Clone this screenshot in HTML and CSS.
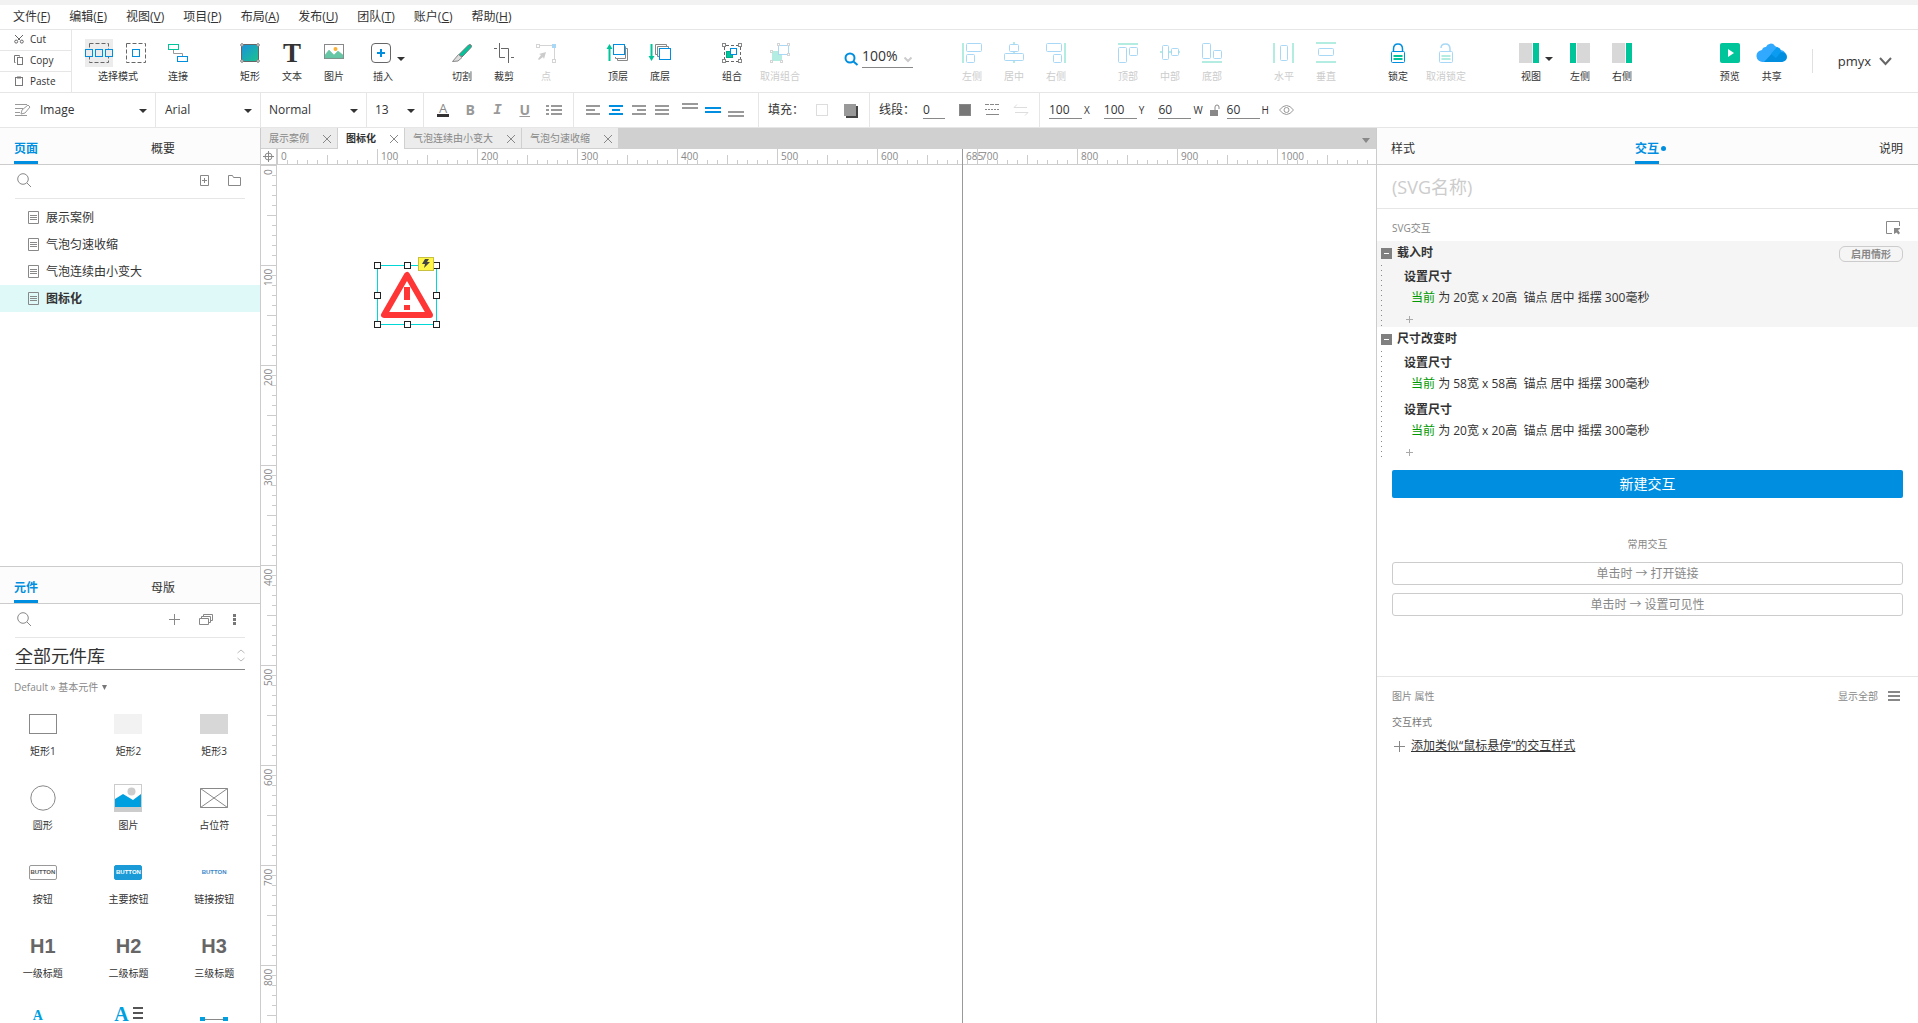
FILE: index.html
```
<!DOCTYPE html>
<html lang="zh-CN">
<head>
  <meta charset="UTF-8">
  <meta name="viewport" content="width=device-width, initial-scale=1.0">
  <title>图标化</title>
  <link rel="stylesheet" href="styles.css">
</head>
<body>
  <nav class="menu">
    <button>文件(<u>F</u>)</button>
    <button>编辑(<u>E</u>)</button>
    <button>视图(<u>V</u>)</button>
    <button>项目(<u>P</u>)</button>
    <button>布局(<u>A</u>)</button>
    <button>发布(<u>U</u>)</button>
    <button>团队(<u>T</u>)</button>
    <button>账户(<u>C</u>)</button>
    <button>帮助(<u>H</u>)</button>
  </nav>

  <header class="toolbar">
    <div class="clip">
      <button><svg width="10" height="10" viewBox="0 0 10 10" fill="none" stroke="#666"><path d="M1 1l5 5M9 1L4 6"/><circle cx="2.2" cy="7.6" r="1.5"/><circle cx="7.8" cy="7.6" r="1.5"/></svg>Cut</button>
      <button><svg width="10" height="10" viewBox="0 0 10 10" fill="none" stroke="#777"><path d="M1.500 7.500h-1v-7h5v1"/><rect x="3.500" y="2.500" width="5" height="7"/></svg>Copy</button>
      <button><svg width="10" height="10" viewBox="0 0 10 10" fill="none" stroke="#777"><rect x="1.500" y="1.500" width="7" height="8"/><path d="M3 1.500h4" stroke-width="2"/></svg>Paste</button>
    </div>

    <div class="group first">
      <button class="tool modes">
        <span class="mode-icons">
          <svg class="picked" width="28" height="28" viewBox="0 0 28 28" fill="none" stroke="#666"><rect x="4.500" y="4.500" width="19" height="19" stroke-dasharray="4 2"/><g stroke="#008fe0" fill="#ececec"><rect x=".5" y="10.500" width="7" height="7"/><rect x="10.500" y="10.500" width="7" height="7"/><rect x="20.500" y="10.500" width="7" height="7"/></g></svg>
          <svg width="20" height="20" viewBox="0 0 20 20" fill="none" stroke="#666"><rect x=".5" y=".5" width="19" height="19" stroke-dasharray="4 2"/><rect x="6.500" y="6.500" width="7" height="7" stroke="#008fe0"/></svg>
        </span>选择模式</button>
      <button class="tool"><svg width="20" height="20" viewBox="0 0 20 20" fill="none"><path d="M5.500 7v3.500h9V13" stroke="#999"/><rect x=".5" y="1.500" width="10" height="5" stroke="#00c49a"/><rect x="9.500" y="13.500" width="10" height="5" stroke="#008fe0"/></svg>连接</button>
    </div>

    <div class="group">
      <button class="tool"><svg width="20" height="20" viewBox="0 0 20 20"><defs><linearGradient id="fill" x1="0" y1="0" x2="1" y2="1"><stop offset="0" stop-color="#1a92dd"/><stop offset="1" stop-color="#1cc48c"/></linearGradient></defs><rect x="1.500" y="1.500" width="17" height="17" fill="url(#fill)" stroke="#666"/><g fill="#fff" stroke="#777"><circle cx="2" cy="2" r="1.300"/><circle cx="18" cy="2" r="1.300"/><circle cx="2" cy="18" r="1.300"/><circle cx="18" cy="18" r="1.300"/></g></svg>矩形</button>
      <button class="tool"><svg width="20" height="20" viewBox="0 0 20 20"><text class="glyph-t" x="10" y="19" text-anchor="middle">T</text></svg>文本</button>
      <button class="tool"><svg width="20" height="20" viewBox="0 0 20 20"><rect x=".5" y="1.500" width="19" height="14" fill="#fff" stroke="#888"/><circle cx="11.500" cy="6" r="2" fill="#fbb034"/><path d="M1 12l4-5 5 5 4-4 5 4v3H1z" fill="#66c7a6" stroke="#6b9" stroke-width=".5"/></svg>图片</button>
      <button class="tool drop"><svg width="20" height="20" viewBox="0 0 20 20" fill="none"><rect x=".5" y=".5" width="19" height="19" rx="3.500" stroke="#666"/><path d="M10 6v8M6 10h8" stroke="#008fe0" stroke-width="2"/></svg>插入</button>
    </div>

    <div class="group">
      <button class="tool"><svg width="20" height="20" viewBox="0 0 20 20"><path d="M7 11.500L16.500 2q1.500-1 2.500 0t0 2.500L10 14z" fill="#00c49a" stroke="#777"/><path d="M.5 18.500l6-7 3.500 3-4 3.500z" fill="#ddd" stroke="#888"/></svg>切割</button>
      <button class="tool"><svg width="20" height="20" viewBox="0 0 20 20" fill="none" stroke="#666"><path d="M0 5.500h3M5.500 0v14.500H11M7 5.500h7.500V20M17 14.500h3"/></svg>裁剪</button>
      <button class="tool off" disabled><svg width="20" height="20" viewBox="0 0 20 20" fill="none" stroke="#d4d4d4"><path d="M3 2.500h14M18.500 4v12"/><rect x=".5" y="1.500" width="3" height="3"/><rect x="16.500" y="16.500" width="3" height="3"/><path d="M16 1h4v4h-4z" fill="#a8d8f5" stroke="none"/><path d="M10 9l-7 2 2 1-3 4 1 1 4-3 1 2z" fill="#ccc" stroke="none"/></svg>点</button>
    </div>

    <div class="group">
      <button class="tool"><svg width="22" height="20" viewBox="0 0 22 20" fill="none"><path d="M2.500 18V4" stroke="#00c49a" stroke-width="2"/><path d="M-.5 6l3-5 3 5z" fill="#00c49a"/><path d="M18.500 5.500h2v12h-10v-2M17 3.500h1.500v12h-10V14" stroke="#888"/><rect x="6.500" y="1.500" width="11" height="10" stroke="#008fe0" fill="#fff"/></svg>顶层</button>
      <button class="tool"><svg width="22" height="20" viewBox="0 0 22 20" fill="none"><path d="M2.500 1v14" stroke="#00c49a" stroke-width="2"/><path d="M-.5 13l3 5 3-5z" fill="#00c49a"/><path d="M9 11.500H6.500v-10h11V4M11 13.500H8.500v-10h11V5" stroke="#888"/><rect x="10.500" y="5.500" width="11" height="11" stroke="#008fe0" fill="#fff"/></svg>底层</button>
    </div>

    <div class="group">
      <button class="tool"><svg width="20" height="20" viewBox="0 0 20 20" fill="none"><path d="M4 2.500h12M4 18.500h12M2.500 4v12M18.500 4v12" stroke="#666" stroke-dasharray="3 2"/><g stroke="#888" fill="#fff"><rect x=".5" y=".5" width="3" height="3"/><rect x="16.500" y=".5" width="3" height="3"/><rect x=".5" y="16.500" width="3" height="3"/><rect x="16.500" y="16.500" width="3" height="3"/></g><rect x="4.500" y="8.500" width="6" height="6" fill="#00c49a" stroke="#0a8"/><rect x="8.500" y="5.500" width="6" height="6" fill="#fff" stroke="#008fe0"/></svg>组合</button>
      <button class="tool wide off" disabled><svg width="20" height="20" viewBox="0 0 20 20" fill="none"><rect x="2" y="8" width="10" height="10" fill="#b3ece0"/><rect x="8.500" y="2.500" width="10" height="9" fill="#fff" stroke="#a8d8f5"/><g stroke="#d4d4d4" fill="#fff"><rect x=".5" y="7.500" width="2" height="2"/><rect x=".5" y="17.500" width="2" height="2"/><rect x="10.500" y="17.500" width="2" height="2"/><rect x="7.500" y=".5" width="2" height="2"/><rect x="17.500" y=".5" width="2" height="2"/><rect x="17.500" y="10.500" width="2" height="2"/></g></svg>取消组合</button>
    </div>

    <div class="group zoom">
      <svg width="14" height="14" viewBox="0 0 14 14" fill="none" stroke="#008fe0" stroke-width="2"><circle cx="6" cy="6" r="4.500"/><path d="M9.500 9.500l4 3.500"/></svg>
      <label class="zoom-value"><input value="100%" aria-label="缩放"><svg width="8" height="5" viewBox="0 0 8 5" fill="none" stroke="#ccc" stroke-width="2"><path d="M.5.5L4 4 7.500.5"/></svg></label>
    </div>

    <div class="group">
      <button class="tool off" disabled><svg width="20" height="20" viewBox="0 0 20 20" fill="none" stroke="#a8d8f5"><path d="M1 0v20" stroke="#b3ece0" stroke-width="2"/><rect x="4.500" y=".5" width="15" height="8" rx="1"/><rect x="4.500" y="11.500" width="8" height="8" rx="1"/></svg>左侧</button>
      <button class="tool off" disabled><svg width="20" height="20" viewBox="0 0 20 20" fill="none" stroke="#a8d8f5"><path d="M10-1v21" stroke="#b3ece0" stroke-width="2"/><rect x="5.500" y="1.500" width="9" height="7" rx="1" fill="#fff"/><rect x=".5" y="10.500" width="19" height="7" rx="1" fill="#fff"/></svg>居中</button>
      <button class="tool off" disabled><svg width="20" height="20" viewBox="0 0 20 20" fill="none" stroke="#a8d8f5"><path d="M19 0v20" stroke="#b3ece0" stroke-width="2"/><rect x=".5" y=".5" width="15" height="8" rx="1"/><rect x="7.500" y="11.500" width="8" height="8" rx="1"/></svg>右侧</button>
    </div>

    <div class="group">
      <button class="tool off" disabled><svg width="20" height="20" viewBox="0 0 20 20" fill="none" stroke="#a8d8f5"><path d="M0 1h20" stroke="#b3ece0" stroke-width="2"/><rect x=".5" y="4.500" width="8" height="15" rx="1"/><rect x="11.500" y="4.500" width="8" height="8" rx="1"/></svg>顶部</button>
      <button class="tool off" disabled><svg width="20" height="20" viewBox="0 0 20 20" fill="none" stroke="#a8d8f5"><path d="M0 9h20" stroke="#b3ece0" stroke-width="2"/><rect x="2.500" y="2.500" width="6" height="14" rx="1" fill="#fff"/><rect x="11.500" y="5.500" width="7" height="7" rx="1" fill="#fff"/></svg>中部</button>
      <button class="tool off" disabled><svg width="20" height="20" viewBox="0 0 20 20" fill="none" stroke="#a8d8f5"><path d="M0 19h20" stroke="#b3ece0" stroke-width="2"/><rect x=".5" y=".5" width="8" height="15" rx="1"/><rect x="11.500" y="7.500" width="8" height="8" rx="1"/></svg>底部</button>
    </div>

    <div class="group">
      <button class="tool off" disabled><svg width="20" height="20" viewBox="0 0 20 20" fill="none" stroke="#a8d8f5"><path d="M0 0v20M19 0v20" stroke="#b3ece0" stroke-width="2"/><rect x="6.500" y="2.500" width="7" height="15" rx="1"/></svg>水平</button>
      <button class="tool off" disabled><svg width="20" height="20" viewBox="0 0 20 20" fill="none" stroke="#a8d8f5"><path d="M0 0h20M0 19h20" stroke="#b3ece0" stroke-width="2"/><rect x="2.500" y="5.500" width="15" height="7" rx="1"/></svg>垂直</button>
    </div>

    <div class="group">
      <button class="tool"><svg width="20" height="20" viewBox="0 0 20 20" fill="none" stroke="#008fe0"><path d="M5.500 8V6q0-5 4.500-5t4.500 5v2" stroke-width="1.500"/><rect x="3.500" y="8.500" width="13" height="11" rx="1"/><path d="M5.500 13h9M5.500 16h9" stroke="#00c49a" stroke-width="2"/></svg>锁定</button>
      <button class="tool wide off" disabled><svg width="20" height="20" viewBox="0 0 20 20" fill="none" stroke="#a8d8f5"><path d="M5 5q0-4 4.500-4t4.500 5v2" stroke-width="1.500"/><rect x="3.500" y="8.500" width="13" height="11" rx="1"/><path d="M5.500 13h9M5.500 16h9" stroke="#b3ece0" stroke-width="2"/></svg>取消锁定</button>
    </div>

    <div class="group">
      <button class="tool drop"><svg width="20" height="20" viewBox="0 0 20 20"><path d="M0 0h13v20H0z" fill="#d8d8d8"/><path d="M14 0h6v20h-6z" fill="#00c49a"/></svg>视图</button>
      <button class="tool"><svg width="20" height="20" viewBox="0 0 20 20"><path d="M0 0h6v20H0z" fill="#00c49a"/><path d="M7 0h13v20H7z" fill="#d8d8d8"/></svg>左侧</button>
      <button class="tool"><svg width="20" height="20" viewBox="0 0 20 20"><path d="M0 0h13v20H0z" fill="#d8d8d8"/><path d="M14 0h6v20h-6z" fill="#00c49a"/></svg>右侧</button>
    </div>

    <div class="group last">
      <button class="tool"><svg width="20" height="20" viewBox="0 0 20 20"><rect width="20" height="20" rx="2" fill="#00c49a"/><path d="M8 6l6 4-6 4z" fill="#fff"/></svg>预览</button>
      <button class="tool"><svg width="30" height="20" viewBox="0 0 30 20"><path d="M6 19a6 6 0 01-1-12 4 4 0 014-3 5 5 0 019-1 6 6 0 014 4 6 6 0 012 12z" fill="#31a9ff"/><path d="M7 19L20 5q3 0 3 4 7 0 7 5 0 4-5 5z" fill="#008fe0"/><path d="M14 11l6-7q4 1 4 5l-5 6z" fill="#0a9cf0"/></svg>共享</button>
    </div>
    <button class="account">pmyx<svg width="13" height="9" viewBox="0 0 13 9" fill="none" stroke="#666" stroke-width="2"><path d="M1 1l5.500 6L12 1"/></svg></button>
  </header>

  <div class="format">
    <div class="cell style-cell">
      <svg width="16" height="14" viewBox="0 0 16 14" fill="none" stroke="#999"><path d="M0 1.500h12M0 5.500h8M0 9.500h5M0 12.500h12M6 11l1-4 6-5 2 2-5 6z"/></svg>
      <select aria-label="样式"><option>Image</option></select>
    </div>
    <div class="cell font-cell"><select aria-label="字体"><option>Arial</option></select></div>
    <div class="cell weight-cell"><select aria-label="字重"><option>Normal</option></select></div>
    <div class="cell size-cell"><select aria-label="字号"><option>13</option></select></div>
    <div class="cell text-cell">
      <button class="ft color">A</button>
      <button class="ft bold">B</button>
      <button class="ft italic">I</button>
      <button class="ft under">U</button>
      <button aria-label="项目符号"><svg width="16" height="12" viewBox="0 0 16 12" stroke="#999" stroke-width="2"><path d="M0 2h3M5 2h11M0 6h3M5 6h11M0 10h3M5 10h11"/></svg></button>
    </div>
    <div class="cell align-cell">
      <button aria-label="左对齐"><svg width="14" height="12" viewBox="0 0 14 12" stroke="#999" stroke-width="2"><path d="M0 2h14M0 6h9M0 10h14"/></svg></button>
      <button aria-label="居中对齐"><svg width="14" height="12" viewBox="0 0 14 12" stroke="#008fe0" stroke-width="2"><path d="M0 2h14M3 6h8M0 10h14"/></svg></button>
      <button aria-label="右对齐"><svg width="14" height="12" viewBox="0 0 14 12" stroke="#999" stroke-width="2"><path d="M0 2h14M5 6h9M0 10h14"/></svg></button>
      <button aria-label="两端对齐"><svg width="14" height="12" viewBox="0 0 14 12" stroke="#999" stroke-width="2"><path d="M0 2h14M0 6h14M0 10h14"/></svg></button>
      <button class="vertical" aria-label="顶部"><svg width="16" height="14" viewBox="0 0 16 14" stroke="#999" stroke-width="2"><path d="M0 1h16M0 5h16"/></svg></button>
      <button aria-label="中部"><svg width="16" height="14" viewBox="0 0 16 14" stroke="#008fe0" stroke-width="2"><path d="M0 5h16M0 9h16"/></svg></button>
      <button aria-label="底部"><svg width="16" height="14" viewBox="0 0 16 14" stroke="#999" stroke-width="2"><path d="M0 9h16M0 13h16"/></svg></button>
    </div>
    <div class="cell fill-cell">
      <span>填充：</span>
      <button class="swatch" aria-label="填充颜色"></button>
      <button class="swatch shadow" aria-label="阴影"></button>
    </div>
    <div class="cell line-cell">
      <label for="line">线段：</label>
      <input id="line" class="short" value="0">
      <button class="swatch dark" aria-label="线段颜色"></button>
      <button aria-label="线型"><svg width="15" height="12" viewBox="0 0 15 12" stroke="#888"><path d="M0 .5h15" stroke-dasharray="4 1"/><path d="M0 5.500h15" stroke-dasharray="2 1"/><path d="M1 10.500h13"/></svg></button>
      <button aria-label="箭头"><svg width="14" height="12" viewBox="0 0 14 12" fill="none" stroke="#ddd"><path d="M13 3.500H0L3 .5M1 8.500h13l-3 3"/></svg></button>
    </div>
    <div class="cell size-pos">
      <label><input value="100">X</label>
      <label><input value="100">Y</label>
      <label><input value="60">W</label>
      <svg class="ratio" width="10" height="12" viewBox="0 0 10 12"><path d="M0 6h8v6H0z" fill="#888"/><path d="M5 6V3q0-2 2-2t2 2v2" fill="none" stroke="#888"/></svg>
      <label><input value="60">H</label>
      <button aria-label="显示"><svg width="15" height="10" viewBox="0 0 15 10" fill="none" stroke="#999"><path d="M.5 5q7-9 14 0-7 9-14 0z"/><circle cx="7.500" cy="5" r="2.500"/></svg></button>
    </div>
  </div>

  <main class="work">
    <aside class="left">
      <section class="pages">
        <div class="tabs"><button class="on">页面</button><button>概要</button></div>
        <div class="find">
          <svg class="search" width="15" height="15" viewBox="0 0 15 15" fill="none" stroke="#888"><circle cx="6" cy="6" r="5.300"/><path d="M10 10l4 4"/></svg>
          <button aria-label="添加页面"><svg width="9" height="11" viewBox="0 0 9 11" fill="none" stroke="#888"><path d="M.5.5h8v10h-8zM2 5.500h5M4.500 3v5"/></svg></button>
          <button aria-label="添加文件夹"><svg width="13" height="11" viewBox="0 0 13 11" fill="none" stroke="#888"><path d="M.5 10.500V.5h4l1 2h7v8z"/></svg></button>
        </div>
        <ul class="tree">
          <li><svg width="11" height="13" viewBox="0 0 11 13" fill="none" stroke="#888"><path d="M.5.5h10v12H.5zM2 4.500h7M2 6.500h7M2 8.500h7"/></svg>展示案例</li>
          <li><svg width="11" height="13" viewBox="0 0 11 13" fill="none" stroke="#888"><path d="M.5.5h10v12H.5zM2 4.500h7M2 6.500h7M2 8.500h7"/></svg>气泡匀速收缩</li>
          <li><svg width="11" height="13" viewBox="0 0 11 13" fill="none" stroke="#888"><path d="M.5.5h10v12H.5zM2 4.500h7M2 6.500h7M2 8.500h7"/></svg>气泡连续由小变大</li>
          <li class="on"><svg width="11" height="13" viewBox="0 0 11 13" fill="none" stroke="#888"><path d="M.5.5h10v12H.5zM2 4.500h7M2 6.500h7M2 8.500h7"/></svg>图标化</li>
        </ul>
      </section>

      <section class="library">
        <div class="tabs"><button class="on">元件</button><button>母版</button></div>
        <div class="find">
          <svg class="search" width="15" height="15" viewBox="0 0 15 15" fill="none" stroke="#888"><circle cx="6" cy="6" r="5.300"/><path d="M10 10l4 4"/></svg>
          <button aria-label="添加元件库"><svg width="11" height="11" viewBox="0 0 11 11" stroke="#888"><path d="M5.500 0v11M0 5.500h11"/></svg></button>
          <button aria-label="元件库"><svg width="14" height="11" viewBox="0 0 14 11" fill="none" stroke="#888"><path d="M.5 4.500h9v6h-9zM2.500 4V2.500h9v6H10M4.500 2V.5h9v6H12"/></svg></button>
          <button aria-label="更多"><svg width="9" height="11" viewBox="0 0 9 11" fill="#777"><path d="M1 0h3v3H1zM1 4h3v3H1zM1 8h3v3H1z"/></svg></button>
        </div>
        <div class="lib-name">
          <select aria-label="元件库"><option>全部元件库</option></select>
          <svg width="8" height="13" viewBox="0 0 8 13" fill="none" stroke="#bbb"><path d="M.5 4L4 1l3.500 3M.5 9L4 12l3.500-3"/></svg>
        </div>
        <button class="crumb">Default » 基本元件 <svg width="5" height="5" viewBox="0 0 5 5" fill="#777"><path d="M0 0h5L2.500 5z"/></svg></button>
        <ul class="widgets">
          <li><span><svg width="28" height="20"><rect x=".5" y=".5" width="27" height="19" fill="#fff" stroke="#888"/></svg></span>矩形1</li>
          <li><span><svg width="28" height="20"><rect width="28" height="20" fill="#f2f2f2"/></svg></span>矩形2</li>
          <li><span><svg width="28" height="20"><rect width="28" height="20" fill="#d7d7d7"/></svg></span>矩形3</li>
          <li><span><svg width="26" height="26"><circle cx="13" cy="13" r="12.200" fill="none" stroke="#888"/></svg></span>圆形</li>
          <li><span><svg width="28" height="28"><rect x=".5" y=".5" width="27" height="27" fill="#fff" stroke="#ccc"/><circle cx="17.500" cy="7.500" r="4" fill="#ccc"/><path d="M1 15l8-5 10 6 8-6v13H1z" fill="#009fdf"/><path d="M1 23h26v5H1z" fill="#ccc"/></svg></span>图片</li>
          <li><span><svg width="28" height="20" fill="none" stroke="#888"><path d="M.5.5h27v19H.5zM.5.5l27 19M27.500.5l-27 19"/></svg></span>占位符</li>
          <li><span><b class="mini">BUTTON</b></span>按钮</li>
          <li><span><b class="mini primary">BUTTON</b></span>主要按钮</li>
          <li><span><b class="mini plain">BUTTON</b></span>链接按钮</li>
          <li><span><b class="heading">H1</b></span>一级标题</li>
          <li><span><b class="heading">H2</b></span>二级标题</li>
          <li><span><b class="heading">H3</b></span>三级标题</li>
          <li><span class="tail label-a">A</span></li>
          <li><span class="tail label-p">A<svg width="10" height="12" viewBox="0 0 10 12" stroke="#555" stroke-width="2"><path d="M0 1h10M0 6h10M0 11h10"/></svg></span></li>
          <li><span class="tail line-shape"><svg width="28" height="4"><path d="M0 2.500h28" stroke="#888"/><path d="M0 0h5v4H0zM23 0h5v4h-5z" fill="#009fdf"/></svg></span></li>
        </ul>
      </section>
    </aside>

    <section class="center">
      <div class="docs">
        <button>展示案例<i></i></button>
        <button class="on">图标化<i></i></button>
        <button>气泡连续由小变大<i></i></button>
        <button>气泡匀速收缩<i></i></button>
      </div>
      <div class="stage">
        <div class="origin"><svg width="11" height="11" viewBox="0 0 11 11" fill="none" stroke="#888"><circle cx="5.500" cy="5.500" r="3.500"/><path d="M5.500 0v11M0 5.500h11"/></svg></div>
        <div class="ruler across"><span>0</span><span>100</span><span>200</span><span>300</span><span>400</span><span>500</span><span>600</span><span>700</span><span>800</span><span>900</span><span>1000</span></div>
        <div class="ruler down"><span>0</span><span>100</span><span>200</span><span>300</span><span>400</span><span>500</span><span>600</span><span>700</span><span>800</span></div>
        <div class="canvas">
          <div class="selected">
            <svg width="60" height="60" viewBox="0 0 60 60"><path d="M30 10L7 50h46z" fill="none" stroke="#ff3636" stroke-width="6" stroke-linejoin="round"/><path d="M27 22h6v13h-6zM27 40h6v5h-6z" fill="#ff3636"/></svg>
            <b class="h nw"></b><b class="h n"></b><b class="h ne"></b><b class="h w"></b><b class="h e"></b><b class="h sw"></b><b class="h s"></b><b class="h se"></b>
            <div class="bolt"><svg width="8" height="9" viewBox="0 0 8 9" fill="#444"><path d="M3 0h4L5 3h3L2 9l1-4H0z"/></svg></div>
          </div>
        </div>
        <div class="guide">685</div>
      </div>
    </section>

    <aside class="right">
      <div class="tabs spread"><button>样式</button><button class="on dot">交互</button><button>说明</button></div>
      <input class="name" placeholder="(SVG名称)" aria-label="SVG名称">
      <div class="sub"><span>SVG交互</span><svg width="14" height="14" viewBox="0 0 14 14" fill="none" stroke="#888"><path d="M6 12.500H.5V.5h13V5"/><path d="M8 7h6v1l-2 1 2 3-1.500 1.500-2-2L8 13z" fill="#888" stroke="none"/></svg></div>

      <div class="case picked-case">
        <div class="event"><button class="fold" aria-label="折叠"></button>载入时<button class="enable">启用情形</button></div>
        <div class="steps">
          <h4>设置尺寸</h4>
          <p><em>当前</em> 为 20宽 x 20高 &nbsp;锚点 居中 摇摆 300毫秒</p>
          <button class="plus" aria-label="添加动作"></button>
        </div>
      </div>
      <div class="case">
        <div class="event"><button class="fold" aria-label="折叠"></button>尺寸改变时</div>
        <div class="steps">
          <h4>设置尺寸</h4>
          <p><em>当前</em> 为 58宽 x 58高 &nbsp;锚点 居中 摇摆 300毫秒</p>
          <h4>设置尺寸</h4>
          <p><em>当前</em> 为 20宽 x 20高 &nbsp;锚点 居中 摇摆 300毫秒</p>
          <button class="plus" aria-label="添加动作"></button>
        </div>
      </div>

      <div class="actions">
        <button class="new">新建交互</button>
        <p>常用交互</p>
        <button class="quick">单击时 → 打开链接</button>
        <button class="quick">单击时 → 设置可见性</button>
      </div>

      <div class="props">
        <div class="props-head"><span>图片 属性</span><button>显示全部<svg width="12" height="10" viewBox="0 0 12 10" stroke="#888" stroke-width="2"><path d="M0 1h12M0 5h12M0 9h12"/></svg></button></div>
        <h5>交互样式</h5>
        <a href="#"><svg width="11" height="11" viewBox="0 0 11 11" stroke="#888"><path d="M5.500 0v11M0 5.500h11"/></svg><span>添加类似“鼠标悬停”的交互样式</span></a>
      </div>
    </aside>
  </main>
</body>
</html>
```
FILE: styles.css
```
* {
  box-sizing: border-box;
}
body {
  margin: 0;
  height: 100vh;
  display: flex;
  flex-direction: column;
  overflow: hidden;
  background: #fff;
  color: #333;
  font-family: "Open Sans", "Noto Sans CJK SC", sans-serif;
  font-size: 12px;
  line-height: 16px;
}
button, input, select {
  margin: 0;
  padding: 0;
  border: none;
  background: none;
  color: inherit;
  font: inherit;
  white-space: nowrap;
}
input, select {
  outline: none;
  appearance: none;
}
svg {
  flex: none;
  display: block;
  overflow: visible;
}
ul {
  margin: 0;
  padding: 0;
  list-style: none;
}
p, h4, h5 {
  margin: 0;
}

/* menu */
.menu {
  flex: none;
  display: flex;
  gap: 19px;
  height: 30px;
  padding: 0 13px;
  border-top: 5px solid #f2f2f2;
  border-bottom: 1px solid #e6e6e6;
}

/* toolbar */
.toolbar {
  flex: none;
  display: flex;
  height: 63px;
  border-bottom: 1px solid #e6e6e6;
}
.clip {
  display: flex;
  flex-direction: column;
  width: 72px;
  border-right: 1px solid #e6e6e6;
}
.clip button {
  flex: 1;
  display: flex;
  align-items: center;
  gap: 6px;
  padding: 0 0 2px 14px;
  font-size: 10px;
  line-height: 12px;
}
.clip button + button {
  border-top: 1px solid #e6e6e6;
}
.group {
  display: flex;
  margin-left: 30px;
}
.group.first {
  margin-left: 13px;
}
.group.last {
  margin-left: auto;
}
.tool {
  position: relative;
  width: 42px;
  display: flex;
  flex-direction: column;
  align-items: center;
  padding-top: 13px;
  font-size: 10px;
  line-height: 14px;
}
.tool > svg {
  margin-bottom: 6px;
}
.tool.wide {
  width: 54px;
}
.tool.drop {
  width: 56px;
}
.tool.drop > svg {
  margin-right: 4px;
}
.tool.drop::after {
  content: "";
  position: absolute;
  right: 6px;
  top: 27px;
  border: 4px solid transparent;
  border-top-color: #333;
  border-bottom: none;
}
.tool.modes {
  width: 72px;
  padding-top: 9px;
  align-items: flex-start;
}
.mode-icons {
  display: flex;
  align-items: center;
  gap: 13px;
  margin-bottom: 2px;
}
.modes {
  text-indent: 13px;
}
.picked {
  background: #ececec;
}
.off {
  color: #ccc;
}
.glyph-t {
  font: bold 27px "Liberation Serif", serif;
  fill: #333;
}
.zoom {
  width: 84px;
  padding: 0 8px 0 7px;
  align-items: center;
  gap: 4px;
}
.zoom > svg {
  margin-bottom: 4px;
}
.zoom-value {
  flex: 1;
  display: flex;
  align-items: center;
  margin-bottom: 10px;
  border-bottom: 1px solid #888;
}
.zoom-value input {
  width: 42px;
  height: 22px;
  font-size: 14px;
}
.zoom-value svg {
  margin-top: 8px;
}
.account {
  display: flex;
  align-items: center;
  align-self: center;
  gap: 8px;
  height: 24px;
  margin: 0 26px 0 19px;
  padding-left: 25px;
  border-left: 1px solid #e0e0e0;
  font-size: 13px;
}

/* format bar */
.format {
  flex: none;
  display: flex;
  height: 35px;
  border-bottom: 1px solid #e6e6e6;
}
.cell {
  position: relative;
  display: flex;
  align-items: center;
  border-right: 1px solid #e6e6e6;
}
.cell:last-child {
  border: none;
}
.cell select {
  flex: 1;
  min-width: 0;
  height: 34px;
}
.cell:has(select)::after {
  content: "";
  position: absolute;
  right: 8px;
  top: 16px;
  border: 4px solid transparent;
  border-top-color: #333;
  border-bottom: none;
}
.style-cell {
  width: 156px;
  padding-left: 15px;
  gap: 9px;
}
.font-cell {
  width: 105px;
  padding-left: 9px;
}
.weight-cell {
  width: 106px;
  padding-left: 8px;
}
.size-cell {
  width: 57px;
  padding-left: 8px;
}
.text-cell {
  width: 150px;
  justify-content: space-between;
  padding: 0 11px 0 13px;
}
.ft {
  width: 12px;
  color: #999;
  font-size: 14px;
  line-height: 14px;
}
.color {
  color: #888;
  font-size: 13px;
  line-height: 11px;
  border-bottom: 3px solid #333;
}
.bold {
  font-weight: bold;
}
.italic {
  font-family: "Liberation Mono", monospace;
  font-style: italic;
  font-weight: bold;
}
.under {
  font-weight: bold;
  text-decoration: underline;
}
.align-cell {
  width: 185px;
  gap: 9px;
  padding-left: 12px;
}
.align-cell .vertical {
  margin-left: 4px;
}
.align-cell .vertical ~ button {
  margin-left: -2px;
}
.fill-cell {
  width: 111px;
  padding-left: 9px;
}
.swatch {
  width: 12px;
  height: 12px;
  border: 1px solid #ddd;
}
.fill-cell .swatch {
  margin-left: 12px;
}
.swatch.shadow {
  background: #999;
  border: none;
  box-shadow: 2px 2px #444;
}
.fill-cell .shadow {
  margin-left: 16px;
}
.swatch.dark {
  background: #777;
  border-color: #888;
}
.line-cell {
  width: 170px;
  padding-left: 9px;
  gap: 14px;
}
.cell input {
  width: 33px;
  height: 18px;
  border-bottom: 1px solid #888;
}
.cell input.short {
  width: 22px;
  margin-left: -6px;
}
.size-pos {
  flex: 1;
  padding-left: 9px;
  gap: 14px;
}
.size-pos label {
  display: flex;
  align-items: center;
  gap: 2px;
  font-size: 10px;
}
.size-pos input {
  font-size: 12px;
}
.size-pos .ratio {
  margin: 0 -7px;
}
.size-pos button {
  margin-left: -4px;
}

/* panels */
.work {
  flex: 1;
  min-height: 0;
  display: flex;
}
.left {
  flex: none;
  width: 261px;
  display: flex;
  flex-direction: column;
  border-right: 1px solid #ccc;
}
.pages {
  flex: none;
  height: 438px;
}
.library {
  flex: 1;
  min-height: 0;
  overflow: hidden;
  border-top: 1px solid #ccc;
}
.tabs {
  display: grid;
  grid-template-columns: 137px 1fr;
  justify-items: start;
  height: 37px;
  padding-left: 14px;
  background: #fcfcfc;
  border-bottom: 1px solid #ccc;
}
.tabs button {
  position: relative;
  padding-top: 9px;
  border-bottom: 3px solid transparent;
}
.tabs .on {
  color: #008fe0;
  font-weight: bold;
  border-color: #008fe0;
}
.tabs.spread {
  display: flex;
  justify-content: space-between;
  padding: 0 15px 0 14px;
}
.dot::after {
  content: "";
  position: absolute;
  left: 26px;
  top: 18px;
  width: 5px;
  height: 5px;
  border-radius: 50%;
  background: #008fe0;
}
.find {
  display: flex;
  align-items: center;
  gap: 19px;
  height: 34px;
  margin: 0 15px;
  padding: 0 4px 2px 2px;
  border-bottom: 1px solid #e6e6e6;
}
.search {
  margin-right: auto;
}
.tree {
  padding-top: 5px;
}
.tree li {
  display: flex;
  align-items: center;
  gap: 7px;
  height: 27px;
  padding-left: 28px;
}
.tree .on {
  background: #dff9f9;
  font-weight: bold;
}
.lib-name {
  display: flex;
  align-items: center;
  height: 32px;
  margin: 0 15px;
  padding-top: 4px;
  border-bottom: 1px solid #888;
}
.lib-name select {
  flex: 1;
  height: 28px;
  font-size: 18px;
}
.crumb {
  display: flex;
  align-items: center;
  gap: 4px;
  margin: 9px 14px 15px;
  color: #888;
  font-size: 10px;
}
.widgets {
  display: grid;
  grid-template-columns: repeat(3, 1fr);
  padding-right: 3px;
}
.widgets li {
  height: 74px;
  font-size: 10px;
  line-height: 14px;
  text-align: center;
}
.widgets span {
  display: flex;
  align-items: center;
  justify-content: center;
  height: 28px;
  margin-bottom: 6px;
}
.mini {
  width: 28px;
  height: 15px;
  border: 1px solid #999;
  border-radius: 2px;
  color: #555;
  font: bold 6px/13px "Liberation Sans", sans-serif;
}
.mini.primary {
  background: #1a9bd7;
  border-color: #1a9bd7;
  color: #fff;
}
.mini.plain {
  border-color: transparent;
  color: #3a87c8;
}
.heading {
  color: #666;
  font: bold 20px/28px "Liberation Sans", sans-serif;
}
.widgets .tail {
  align-items: flex-start;
  gap: 4px;
  color: #009fdf;
  font: bold 20px/16px "Liberation Serif", serif;
}
.widgets .label-a {
  padding: 2px 10px 0 0;
  font-size: 14px;
}
.label-p svg {
  margin-top: 1px;
}
.widgets .line-shape {
  padding-top: 11px;
}

/* canvas */
.center {
  flex: 1;
  min-width: 0;
  display: flex;
  flex-direction: column;
}
.docs {
  position: relative;
  display: flex;
  gap: 1px;
  height: 21px;
  background: #d0d0d0;
}
.docs::after {
  content: "";
  position: absolute;
  right: 6px;
  top: 10px;
  border: 4px solid transparent;
  border-top: 5px solid #888;
  border-bottom: none;
}
.docs button {
  display: flex;
  align-items: center;
  gap: 14px;
  height: 20px;
  padding: 0 6px 1px 8px;
  background: #ececec;
  color: #888;
  font-size: 10px;
}
.docs .on {
  height: 21px;
  padding-bottom: 2px;
  background: #fff;
  color: #333;
  font-weight: bold;
}
.docs i {
  width: 8px;
  height: 8px;
  margin-top: 2px;
  background:
    linear-gradient(45deg, transparent 46%, #888 46% 54%, transparent 54%),
    linear-gradient(-45deg, transparent 46%, #888 46% 54%, transparent 54%);
}
.stage {
  position: relative;
  flex: 1;
  min-height: 0;
  display: grid;
  grid-template: 16px 1fr / 16px 1fr;
}
.origin {
  padding: 2px;
  border-right: 1px solid #ccc;
  border-bottom: 1px solid #ccc;
}
.ruler {
  display: flex;
  overflow: hidden;
  color: #888;
  font-size: 10px;
  line-height: 14px;
}
.ruler span {
  flex: none;
}
.across {
  border-bottom: 1px solid #ccc;
  background:
    repeating-linear-gradient(to right, #ccc 0 1px, transparent 1px 10px) 0 100% / 100% 4px no-repeat,
    repeating-linear-gradient(to right, #ccc 0 1px, transparent 1px 50px) 0 100% / 100% 9px no-repeat,
    repeating-linear-gradient(to right, #ccc 0 1px, transparent 1px 100px);
}
.across span {
  width: 100px;
  padding-left: 4px;
}
.down {
  flex-direction: column;
  border-right: 1px solid #ccc;
  background:
    repeating-linear-gradient(to bottom, #ccc 0 1px, transparent 1px 10px) 100% 0 / 4px 100% no-repeat,
    repeating-linear-gradient(to bottom, #ccc 0 1px, transparent 1px 50px) 100% 0 / 9px 100% no-repeat,
    repeating-linear-gradient(to bottom, #ccc 0 1px, transparent 1px 100px);
}
.down span {
  height: 100px;
  padding-bottom: 4px;
  writing-mode: vertical-rl;
  transform: rotate(180deg);
  text-align: right;
}
.canvas {
  position: relative;
  overflow: hidden;
}
.selected {
  position: absolute;
  left: 100px;
  top: 100px;
  width: 60px;
  height: 60px;
  outline: 1px solid #00d8d8;
  outline-offset: -1px;
}
.h {
  position: absolute;
  width: 7px;
  height: 7px;
  border: 1px solid #222;
  background: #fff;
}
.nw, .n, .ne { top: -3px; }
.w, .e { top: 27px; }
.sw, .s, .se { top: 56px; }
.nw, .w, .sw { left: -3px; }
.n, .s { left: 27px; }
.ne, .e, .se { left: 56px; }
.bolt {
  position: absolute;
  left: 41px;
  top: -8px;
  width: 16px;
  height: 14px;
  padding: 1px 3px;
  border: 1px solid #c8c040;
  background: #fff648;
}
.guide {
  position: absolute;
  left: 701px;
  top: 0;
  bottom: 0;
  padding-left: 3px;
  border-left: 1px solid #999;
  color: #888;
  font-size: 10px;
  line-height: 14px;
}

/* interactions */
.right {
  flex: none;
  width: 542px;
  border-left: 1px solid #ccc;
}
.name {
  display: block;
  width: 100%;
  height: 44px;
  padding: 0 15px;
  border-bottom: 1px solid #e6e6e6;
  font-size: 18px;
}
.name::placeholder {
  color: #ccc;
}
.sub {
  display: flex;
  align-items: center;
  justify-content: space-between;
  height: 32px;
  padding: 6px 18px 0 15px;
  color: #888;
  font-size: 10px;
}
.case {
  padding: 4px 0 0 4px;
}
.picked-case {
  background: #f5f5f5;
}
.event {
  display: flex;
  align-items: center;
  gap: 5px;
  height: 16px;
  font-weight: bold;
}
.fold {
  width: 11px;
  height: 11px;
  border: 5px solid #808080;
  border-width: 5px 3px;
  background: #fff;
}
.enable {
  height: 16px;
  width: 64px;
  margin: 2px 15px 0 auto;
  border: 1px solid #ccc;
  border-radius: 6px;
  color: #888;
  font-size: 10px;
  line-height: 14px;
}
.steps {
  padding: 8px 0 1px 23px;
  background: repeating-linear-gradient(to bottom, transparent 0 4px, #888 4px 5px) 0 0 / 1px 100% no-repeat;
}
.steps h4 {
  font-size: 12px;
  margin-bottom: 5px;
}
.steps p {
  padding-left: 7px;
  margin-bottom: 10px;
}
.steps em {
  color: #009a00;
  font-style: normal;
}
.plus {
  display: block;
  width: 7px;
  height: 7px;
  margin: 0 0 3px 2px;
  background:
    linear-gradient(#aaa, #aaa) 3px 0 / 1px 7px no-repeat,
    linear-gradient(#aaa, #aaa) 0 3px / 7px 1px no-repeat;
}
.actions {
  padding: 10px 15px 60px;
  text-align: center;
}
.actions button {
  display: block;
  width: 100%;
}
.new {
  height: 28px;
  border-radius: 2px;
  background: #008fe0;
  color: #fff;
  font-size: 14px;
}
.actions p {
  margin: 38px 0 10px;
  color: #888;
  font-size: 10px;
}
.quick {
  height: 23px;
  margin-bottom: 8px;
  border: 1px solid #ccc;
  border-radius: 3px;
  color: #888;
}
.actions .quick:last-child {
  margin-bottom: 0;
}
.props {
  padding: 11px 18px 0 15px;
  border-top: 1px solid #e6e6e6;
}
.props-head, .props-head button {
  display: flex;
  align-items: center;
  justify-content: space-between;
  gap: 10px;
  color: #888;
  font-size: 10px;
}
.props h5 {
  margin: 10px 0 8px;
  color: #777;
  font-size: 10px;
  font-weight: normal;
}
.props a {
  display: flex;
  align-items: center;
  gap: 6px;
  padding-left: 2px;
  color: #333;
  text-decoration: none;
}
.props a span {
  text-decoration: underline;
}
```
